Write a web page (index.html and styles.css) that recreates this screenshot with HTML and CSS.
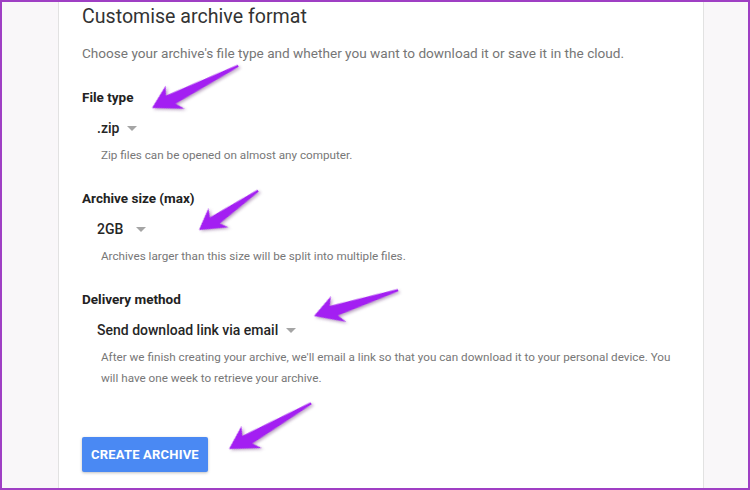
FILE: index.html
```html
<html>
<head>
  <meta charset="utf-8">
  <title>Customise archive format</title>
  <link rel="stylesheet" href="styles.css">
</head>
<body>
  <div class="frame">
    <div class="card">
      <h2 class="title">Customise archive format</h2>
      <p class="intro">Choose your archive's file type and whether you want to download it or save it in the cloud.</p>

      <div class="field">
        <div class="field-label">File type</div>
        <div class="select"><span>.zip</span><i class="caret"></i></div>
        <p class="hint">Zip files can be opened on almost any computer.</p>
      </div>

      <div class="field">
        <div class="field-label">Archive size (max)</div>
        <div class="select"><span>2GB</span><i class="caret wide"></i></div>
        <p class="hint">Archives larger than this size will be split into multiple files.</p>
      </div>

      <div class="field">
        <div class="field-label">Delivery method</div>
        <div class="select"><span>Send download link via email</span><i class="caret"></i></div>
        <p class="hint">After we finish creating your archive, we'll email a link so that you can download it to your personal device. You will have one week to retrieve your archive.</p>
      </div>

      <button class="create-btn">CREATE ARCHIVE</button>
    </div>

    <!-- annotation arrows drawn over the screenshot -->
    <svg class="arrows" width="746" height="486" viewBox="2 2 746 486">
      <g class="arrow" transform="translate(152,108) rotate(-26)">
        <polygon points="0,0 22,-14 18,-5 96,-1.3 96,1 23,6.5 29,15"/>
      </g>
      <g class="arrow" transform="translate(199,230) rotate(-33.5)">
        <polygon points="0,0 20,-13 16,-4.5 71,-1.2 71,1 21,6 26,14"/>
      </g>
      <g class="arrow" transform="translate(314,316) rotate(-17)">
        <polygon points="0,0 22,-14 18,-5 88,-1.3 88,1 23,6.5 29,15"/>
      </g>
      <g class="arrow" transform="translate(229,449) rotate(-29)">
        <polygon points="0,0 22,-14 18,-5 94,-1.3 94,1 23,6.5 29,15"/>
      </g>
    </svg>
  </div>
</body>
</html>
```

FILE: styles.css
```css
body {
  margin: 0;
  font-family: Roboto, "Liberation Sans", Arial, sans-serif;
}
.frame {
  position: relative;
  box-sizing: border-box;
  width: 750px;
  height: 490px;
  border: 2px solid #9f3fc4;
  background: #f9f7f9;
  overflow: hidden;
}
.card {
  box-sizing: border-box;
  margin-left: 56px;
  width: 646px;
  height: 100%;
  background: #fff;
  border-left: 1px solid #e2e2e2;
  border-right: 1px solid #e2e2e2;
  padding: 3px 12px 0 23px;
  display: flex;
  flex-direction: column;
  align-items: flex-start;
}
.title {
  margin: 0;
  font-size: 19.6px;
  line-height: 24px;
  font-weight: 400;
  color: #333;
}
.intro {
  margin: 14px 0 0;
  font-size: 13.6px;
  line-height: 20px;
  color: #767676;
}
.field {
  margin-top: 24px;
}
.field + .field {
  margin-top: 22px;
}
.field-label {
  font-size: 13.5px;
  line-height: 20px;
  font-weight: 700;
  color: #222;
}
.select {
  margin: 11px 0 0 15px;
  display: flex;
  align-items: center;
  font-size: 14px;
  line-height: 20px;
  font-weight: 500;
  color: #262626;
}
.caret {
  margin-left: 8px;
  width: 0;
  height: 0;
  border-left: 5px solid transparent;
  border-right: 5px solid transparent;
  border-top: 5px solid #a5a5a5;
}
.caret.wide {
  margin-left: 13px;
}
.hint {
  margin: 7px 0 0 19px;
  max-width: 576px;
  font-size: 11.7px;
  line-height: 21px;
  color: #777;
}
.create-btn {
  margin-top: 48px;
  height: 35px;
  padding: 0 9px;
  border: none;
  border-radius: 2px;
  background: #4a89f3;
  color: #fff;
  font-family: inherit;
  font-size: 13px;
  font-weight: 700;
  letter-spacing: 0.2px;
  box-shadow: 0 1px 3px rgba(0, 0, 0, 0.25);
}
.arrows {
  position: absolute;
  top: 0;
  left: 0;
  pointer-events: none;
}
.arrow {
  fill: #a31ff2;
  filter: drop-shadow(1px 2px 1.5px rgba(60, 0, 80, 0.35));
}
```
